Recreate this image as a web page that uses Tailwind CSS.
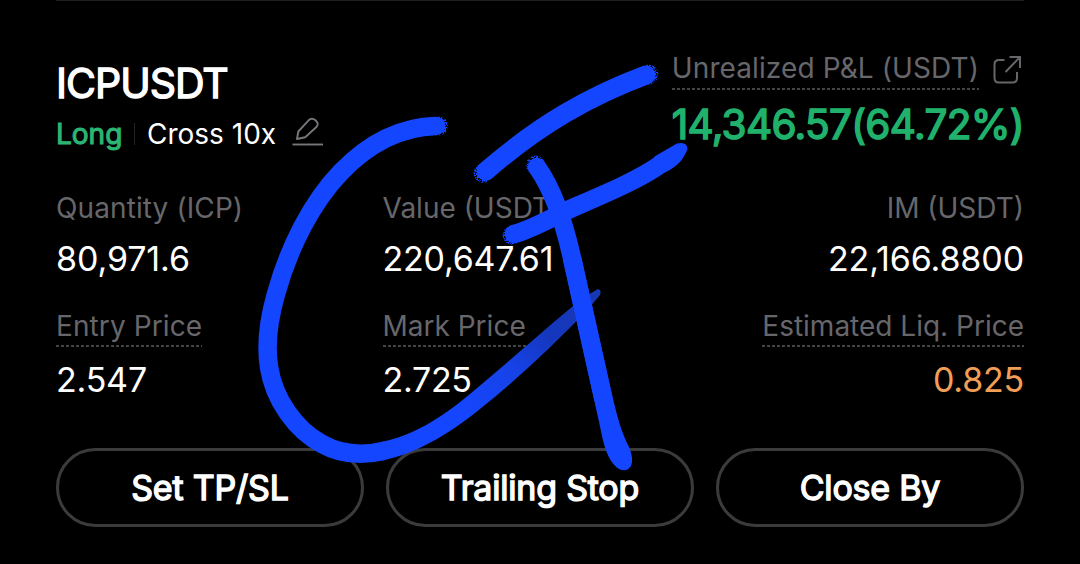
<!DOCTYPE html>
<html lang="en">
<head>
  <meta charset="UTF-8" />
  <meta name="viewport" content="width=device-width, initial-scale=1.0"/>
  <title>ICPUSDT Position</title>
  <script src="https://cdn.jsdelivr.net/npm/@tailwindcss/browser@4"></script>
</head>
<body class="bg-black text-white font-['Inter',sans-serif] overflow-hidden">
  <div class="relative w-[1080px] h-[564px] px-14 overflow-hidden">
    <div class="h-px bg-[#1e1e1f]"></div>

    <!-- Header -->
    <div class="flex justify-between h-[189px]">
      <div class="pt-[58px]">
        <h1 class="text-[41px] leading-[48px] tracking-[-1px] [-webkit-text-stroke:1.3px_currentColor]">ICPUSDT</h1>
        <div class="flex items-center mt-[7px] h-10 text-[28px] leading-10">
          <span class="text-[#2bb673] w-[66px] [-webkit-text-stroke:1.1px_currentColor]">Long</span>
          <span class="w-px h-[22px] bg-[#242427] ml-[12px] mr-3"></span>
          <span>Cross 10x</span>
          <svg class="ml-4 w-8 h-8 -mt-1" viewBox="0 0 32 32" fill="none" stroke="#77777b" stroke-width="1.9" stroke-linejoin="round">
            <path d="M5 23 L6.3 15.5 L16.6 4.3 Q19.8 1.2 23.5 4.2 Q27.4 7.6 24.4 11 L13.2 21.2 Z"/>
            <path d="M0.5 28.5 H31"/>
          </svg>
        </div>
      </div>
      <div class="pt-[51px] flex flex-col items-end">
        <div class="flex">
          <div>
            <div class="text-[28px] leading-8 text-[#67676b] tracking-[0.1px]">Unrealized P&amp;L (USDT)</div>
            <div class="mt-1 h-[2px] bg-[repeating-linear-gradient(90deg,#444447_0_3px,transparent_3px_5px)]"></div>
          </div>
          <svg class="ml-[13px] mt-[2px] w-8 h-8" viewBox="0 0 32 32" fill="none" stroke="#67676b" stroke-width="2">
            <path d="M12.500 6 H7 Q2.500 6 2.500 10.500 V24 Q2.500 28.500 7 28.500 H20.500 Q25 28.500 25 24 V18"/>
            <path d="M17.500 3 H28 V14 M28 3 L13.500 18"/>
          </svg>
        </div>
        <div class="mt-[10px] text-[40.5px] leading-[50px] text-[#20b26c] tracking-[-0.65px] [-webkit-text-stroke:1.5px_currentColor]">14,346.57(64.72%)</div>
      </div>
    </div>

    <!-- Figures -->
    <div class="grid grid-cols-[326.5px_1fr_auto] h-[258px] grid-rows-[120px_1fr]">
      <div>
        <div class="text-[28px] leading-9 text-[#67676b] tracking-[0.1px]">Quantity (ICP)</div>
        <div class="mt-[13px] text-[34px] leading-10 tracking-[-0.1px]">80,971.6</div>
      </div>
      <div>
        <div class="text-[28px] leading-9 text-[#67676b]">Value (USDT)</div>
        <div class="mt-[13px] text-[34px] leading-10 tracking-[-0.2px]">220,647.61</div>
      </div>
      <div class="text-right">
        <div class="text-[28px] leading-9 text-[#67676b]">IM (USDT)</div>
        <div class="mt-[13px] text-[34px] leading-10 tracking-[-0.1px]">22,166.8800</div>
      </div>
      <div class="flex flex-col items-start">
        <div>
          <div class="text-[28px] leading-8 text-[#67676b] tracking-[0.1px]">Entry Price</div>
          <div class="mt-[3px] h-[2px] bg-[repeating-linear-gradient(90deg,#444447_0_3px,transparent_3px_5px)]"></div>
        </div>
        <div class="mt-[13px] text-[34px] leading-10 tracking-[-0.2px]">2.547</div>
      </div>
      <div class="flex flex-col items-start">
        <div>
          <div class="text-[28px] leading-8 text-[#67676b]">Mark Price</div>
          <div class="mt-[3px] h-[2px] bg-[repeating-linear-gradient(90deg,#444447_0_3px,transparent_3px_5px)]"></div>
        </div>
        <div class="mt-[13px] text-[34px] leading-10 tracking-[-0.3px]">2.725</div>
      </div>
      <div class="flex flex-col items-end">
        <div>
          <div class="text-[28px] leading-8 text-[#67676b]">Estimated Liq. Price</div>
          <div class="mt-[3px] h-[2px] bg-[repeating-linear-gradient(90deg,#444447_0_3px,transparent_3px_5px)]"></div>
        </div>
        <div class="mt-[13px] text-[34px] leading-10 tracking-[-0.2px] text-[#f19e56]">0.825</div>
      </div>
    </div>

    <!-- Actions -->
    <div class="grid grid-cols-3 gap-[22px] text-[34px] tracking-[-0.2px] [-webkit-text-stroke:1.4px_currentColor]">
      <button class="h-[79px] rounded-full border-3 border-[#3b3b3e]">Set TP/SL</button>
      <button class="h-[79px] rounded-full border-3 border-[#3b3b3e]">Trailing Stop</button>
      <button class="h-[79px] rounded-full border-3 border-[#3b3b3e]">Close By</button>
    </div>

    <!-- Marker signature -->
    <svg class="absolute inset-0 pointer-events-none" width="1080" height="564" viewBox="0 0 1080 564" fill="none">
      <defs>
        <linearGradient id="tail" gradientUnits="userSpaceOnUse" x1="455" y1="415" x2="600" y2="292">
          <stop offset="0" stop-color="#1546ff"/>
          <stop offset="0.4" stop-color="#1642e6"/>
          <stop offset="0.65" stop-color="#1537bd"/>
          <stop offset="1" stop-color="#1738b4"/>
        </linearGradient>
        <filter id="grain" x="-20%" y="-20%" width="140%" height="140%">
          <feTurbulence type="fractalNoise" baseFrequency="0.8" numOctaves="2" seed="4"/>
          <feColorMatrix values="0 0 0 0 0  0 0 0 0 0  0 0 0 0 0  9 0 0 0 -4"/>
          <feComposite in="SourceGraphic" operator="in"/>
        </filter>
      </defs>
      <g fill="#1546ff" filter="url(#grain)">
        <circle cx="438.500" cy="126" r="9.500"/>
        <circle cx="648.500" cy="74.500" r="10"/>
        <circle cx="483.500" cy="173" r="10"/>
        <circle cx="535.500" cy="165" r="9.500"/>
        <circle cx="512" cy="235" r="9.500"/>
      </g>
      <g stroke="#1546ff" stroke-width="18.500" stroke-linecap="round" stroke-linejoin="round">
        <path d="M436 126 C400 127 369 143 341 172 C312 202 289 247 276 294 C268 322 266 348 269 367 C274 400 296 430 322 444 C342 455 362 456 383 451"/>
        <path stroke-width="19" d="M646 75 C590 96 540 124 486 171"/>
        <path d="M514 234 C533 229 554 216 578 205.500 C607 193 640 179 661 164"/>
        <path d="M537 167 C554 191 564 222 572 258 C583 306 592 349 603 397 C608 420 614 441 622.500 460"/>
      </g>
      <path fill="#1546ff" d="M654 157 C664 151 671 147 677 143.500 Q687 141 687.500 149 C684 158 679 166 665 172.500 Z"/>
      <path fill="#1546ff" d="M594 398 L612 395 C617 418 622 433 629 447 Q634 459 631 466 Q627 472 620 469.500 C610 464 605 450 602 436 Z"/>
      <path fill="url(#tail)" d="M381 442 C412 436 440 419 470 394 C510 361 548 326 583 298 L598 289 Q602 290 600 295 L589 308 C553 346 515 381 480 409 C447 436 412 455 382 460.500 Z"/>
      <!-- stem passes over the tail -->
      <path stroke="#1546ff" stroke-width="18.500" d="M572 258 C583 306 592 349 603 397"/>
    </svg>
  </div>
</body>
</html>
